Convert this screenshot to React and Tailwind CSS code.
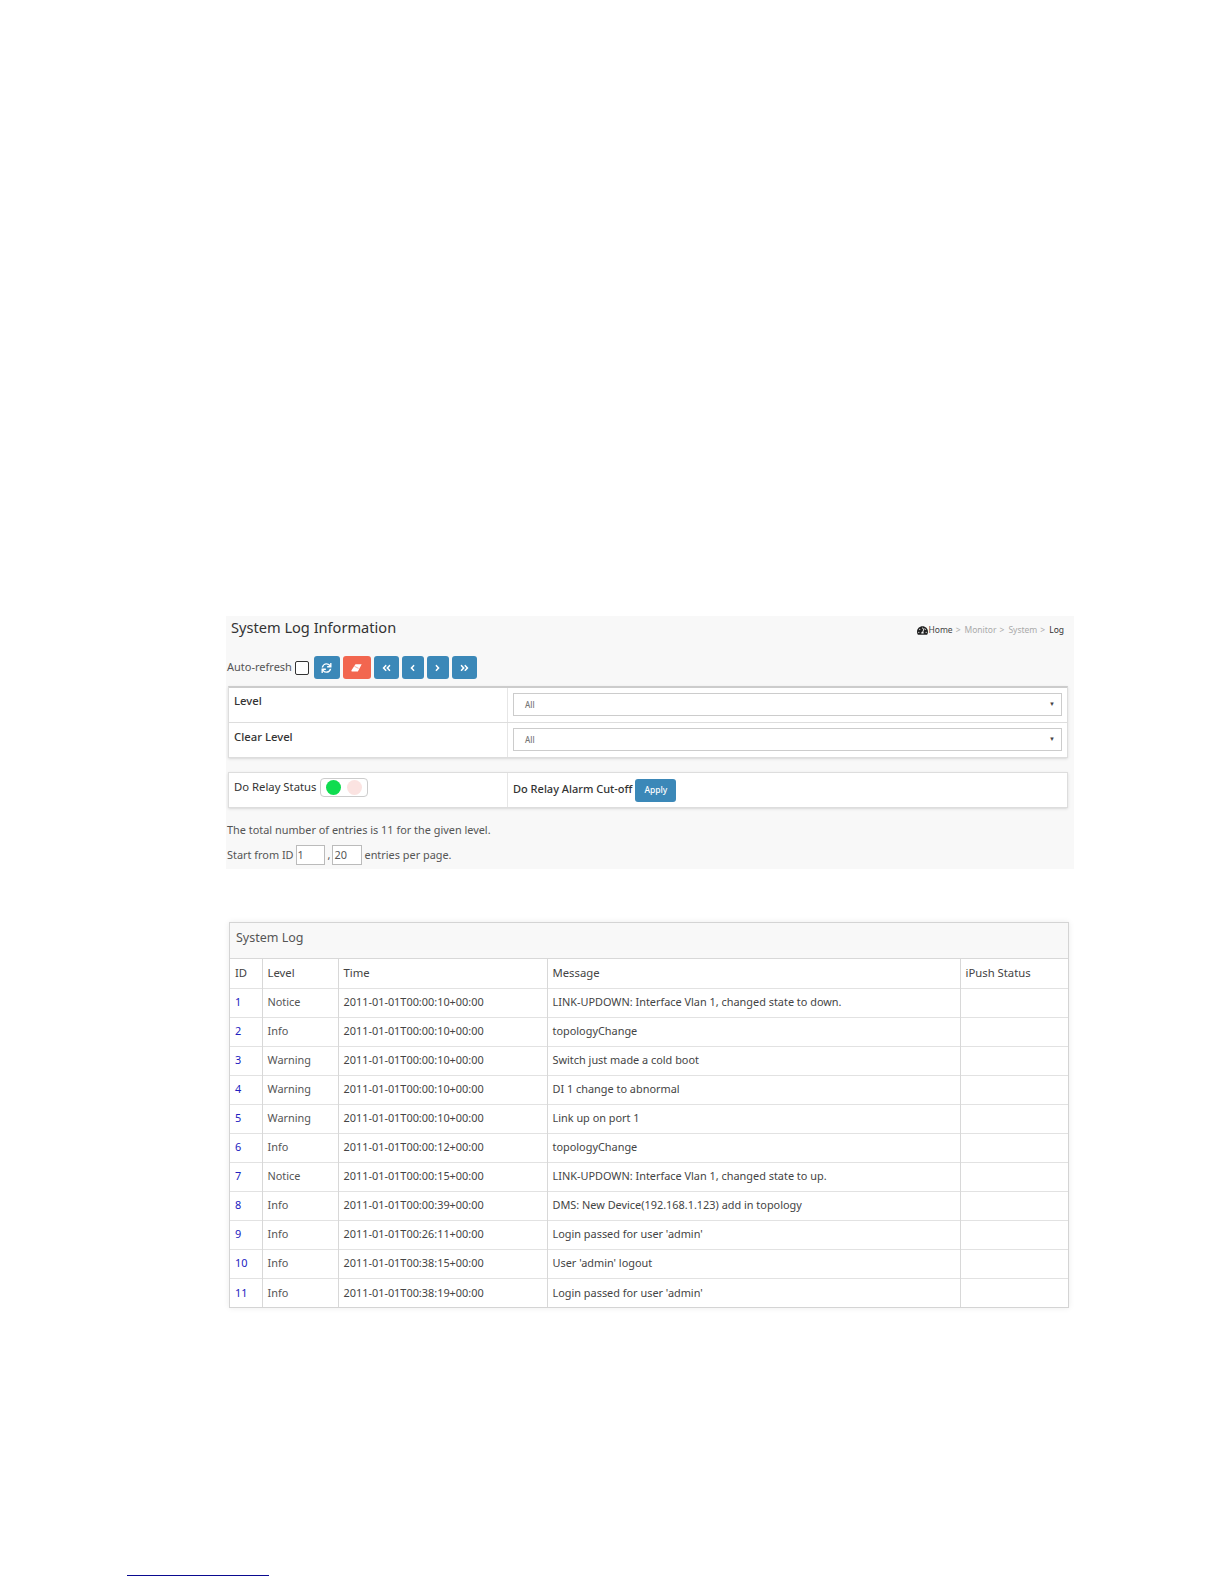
import React from 'react';
import { FaSync, FaAngleDoubleLeft, FaAngleLeft, FaAngleRight, FaAngleDoubleRight, FaTachometerAlt } from 'react-icons/fa';

const rows = [
  ['1', 'Notice', '2011-01-01T00:00:10+00:00', 'LINK-UPDOWN: Interface Vlan 1, changed state to down.'],
  ['2', 'Info', '2011-01-01T00:00:10+00:00', 'topologyChange'],
  ['3', 'Warning', '2011-01-01T00:00:10+00:00', 'Switch just made a cold boot'],
  ['4', 'Warning', '2011-01-01T00:00:10+00:00', 'DI 1 change to abnormal'],
  ['5', 'Warning', '2011-01-01T00:00:10+00:00', 'Link up on port 1'],
  ['6', 'Info', '2011-01-01T00:00:12+00:00', 'topologyChange'],
  ['7', 'Notice', '2011-01-01T00:00:15+00:00', 'LINK-UPDOWN: Interface Vlan 1, changed state to up.'],
  ['8', 'Info', '2011-01-01T00:00:39+00:00', 'DMS: New Device(192.168.1.123) add in topology'],
  ['9', 'Info', '2011-01-01T00:26:11+00:00', "Login passed for user 'admin'"],
  ['10', 'Info', '2011-01-01T00:38:15+00:00', "User 'admin' logout"],
  ['11', 'Info', '2011-01-01T00:38:19+00:00', "Login passed for user 'admin'"],
];

const EraserIcon = ({ className }) => (
  <svg viewBox="0 0 16 12" className={className} fill="currentColor">
    <path d="M6.5 0.5 H15.5 L10 11 H1 L0.5 9.5 Z" />
    <path d="M5 3.5 L11 6.5" stroke="#f2664f" strokeWidth="0.8" fill="none" />
  </svg>
);

const NavButton = ({ icon: Icon, width, red }) => (
  <button className={`${width} h-[23px] rounded-[3px] text-white flex items-center justify-center ${red ? 'bg-[#f2664f]' : 'bg-[#3b88b8]'}`}>
    <Icon className="w-[11px] h-[10px]" />
  </button>
);

const SelectBox = () => (
  <div className="h-[23px] border border-[#cccccc] bg-white flex items-center justify-between pl-[11px] pr-[6px] text-[8px] text-[#777777]">
    <span>All</span>
    <span className="text-[6px] text-[#444444]">▼</span>
  </div>
);

const App = () => {
  return (
    <div className="w-[1224px] h-[1584px] bg-white pt-[616px] pl-[226px] font-['Noto_Sans',sans-serif] text-[#444444] flex flex-col">
      <div className="w-[848px] h-[253px] bg-[#f8f8f8] flex flex-col">
        <div className="h-[23px] pl-[5px] pr-[10px] flex items-center justify-between">
          <h1 className="text-[14.6px] text-[#333333] leading-none -mt-[1px]">System Log Information</h1>
          <div className="flex items-center text-[8.5px] text-[#aaaaaa] gap-[3px] mt-[5px]">
            <span className="flex items-center text-[#444444]"><FaTachometerAlt className="w-[11px] h-[11px] text-[#222222]" />Home</span>
            <span>&gt;</span><span className="ml-[1px]">Monitor</span>
            <span>&gt;</span><span className="ml-[1px]">System</span>
            <span>&gt;</span><span className="ml-[1px] text-[#333333]">Log</span>
          </div>
        </div>

        <div className="mt-[17px] flex items-center h-[23px] pl-[1px] text-[11px] text-[#555555]">
          <span>Auto-refresh</span>
          <span className="ml-[3px] w-[14px] h-[14px] border border-[#333333] rounded-[2px] bg-white"></span>
          <div className="ml-[5px] flex gap-[3px]">
            <NavButton icon={FaSync} width="w-[26px]" />
            <NavButton icon={EraserIcon} width="w-[28px]" red />
            <NavButton icon={FaAngleDoubleLeft} width="w-[25px]" />
            <NavButton icon={FaAngleLeft} width="w-[22px]" />
            <NavButton icon={FaAngleRight} width="w-[22px]" />
            <NavButton icon={FaAngleDoubleRight} width="w-[25px]" />
          </div>
        </div>

        <div className="mt-[7px] ml-[2px] w-[840px] bg-white border border-[#dddddd] border-t-2 border-t-[#cccccc] shadow-sm text-[11.3px] font-medium text-[#333333]">
          <div className="flex h-[35px] border-b border-[#dddddd]">
            <div className="w-[279px] pl-[5px] pt-[5px] border-r border-[#e6e6e6]">Level</div>
            <div className="flex-1 px-[5px] pt-[5px]"><SelectBox /></div>
          </div>
          <div className="flex h-[34px]">
            <div className="w-[279px] pl-[5px] pt-[6px] border-r border-[#e6e6e6]">Clear Level</div>
            <div className="flex-1 px-[5px] pt-[5px]"><SelectBox /></div>
          </div>
        </div>

        <div className="mt-[14px] ml-[2px] w-[840px] h-[36px] flex bg-white border border-[#dddddd] shadow-sm text-[11.3px] text-[#333333]">
          <div className="w-[279px] pl-[5px] flex items-center border-r border-[#e6e6e6] pb-[5px]">
            <span>Do Relay Status</span>
            <div className="ml-[4px] w-[48px] h-[19px] border border-[#cccccc] rounded-[4px] flex items-center gap-[6px] pl-[5px]">
              <span className="w-[15px] h-[15px] rounded-full bg-[#0fdc50]"></span>
              <span className="w-[15px] h-[15px] rounded-full bg-[#fbe3e1]"></span>
            </div>
          </div>
          <div className="flex-1 pl-[5px] flex items-center font-medium">
            <span className="text-[11px] -mt-[1px]">Do Relay Alarm Cut-off</span>
            <button className="ml-[3px] w-[41px] h-[23px] rounded-[3px] bg-[#3b88b8] text-white text-[8.5px]">Apply</button>
          </div>
        </div>

        <p className="mt-[14px] pl-[1px] text-[10.9px] text-[#555555] leading-[16px]">The total number of entries is 11 for the given level.</p>
        <div className="mt-[7px] pl-[1px] flex items-center text-[10.9px] text-[#555555]">
          <span>Start from ID</span>
          <span className="ml-[2px] w-[29px] h-[20px] border border-[#bbbbbb] bg-white pl-[1px] flex items-center">1</span>
          <span className="ml-[3px]">,</span>
          <span className="ml-[2px] w-[30px] h-[20px] border border-[#bbbbbb] bg-white pl-[1px] flex items-center">20</span>
          <span className="ml-[2px]">entries per page.</span>
        </div>
      </div>

      <div className="mt-[53px] ml-[3px] w-[840px] bg-white border border-[#d4d4d4] shadow-[0_0_6px_rgba(0,0,0,0.08)] text-[#444444]">
        <div className="h-[36px] bg-[#f8f8f8] pl-[6px] pb-[4px] flex items-center text-[12.5px] text-[#555555] border-b border-[#d8d8d8]">System Log</div>
        <table className="w-full table-fixed border-collapse text-[10.9px]">
          <colgroup>
            <col className="w-[32px]" />
            <col className="w-[76px]" />
            <col className="w-[209px]" />
            <col className="w-[413px]" />
            <col />
          </colgroup>
          <thead>
            <tr className="h-[29px] text-left text-[#444444] border-b border-[#e2e2e2]">
              {['ID', 'Level', 'Time', 'Message', 'iPush Status'].map((h) => (
                <th key={h} className="pl-[5px] font-normal border-r border-[#d8d8d8] last:border-r-0 text-[11.3px]">{h}</th>
              ))}
            </tr>
          </thead>
          <tbody>
            {rows.map((row) => (
              <tr key={row[0]} className="h-[29px] border-b border-[#e2e2e2] last:border-b-0">
                <td className="pl-[5px] text-[#2020c0] border-r border-[#d8d8d8]">{row[0]}</td>
                <td className="pl-[5px] border-r border-[#d8d8d8] text-[#555555]">{row[1]}</td>
                <td className="pl-[5px] border-r border-[#d8d8d8]">{row[2]}</td>
                <td className="pl-[5px] border-r border-[#d8d8d8]">{row[3]}</td>
                <td></td>
              </tr>
            ))}
          </tbody>
        </table>
      </div>

      <div className="mt-auto mb-[8px] -ml-[99px] w-[142px] h-[1px] bg-[#0a0a90]"></div>
    </div>
  );
};

export default App;
